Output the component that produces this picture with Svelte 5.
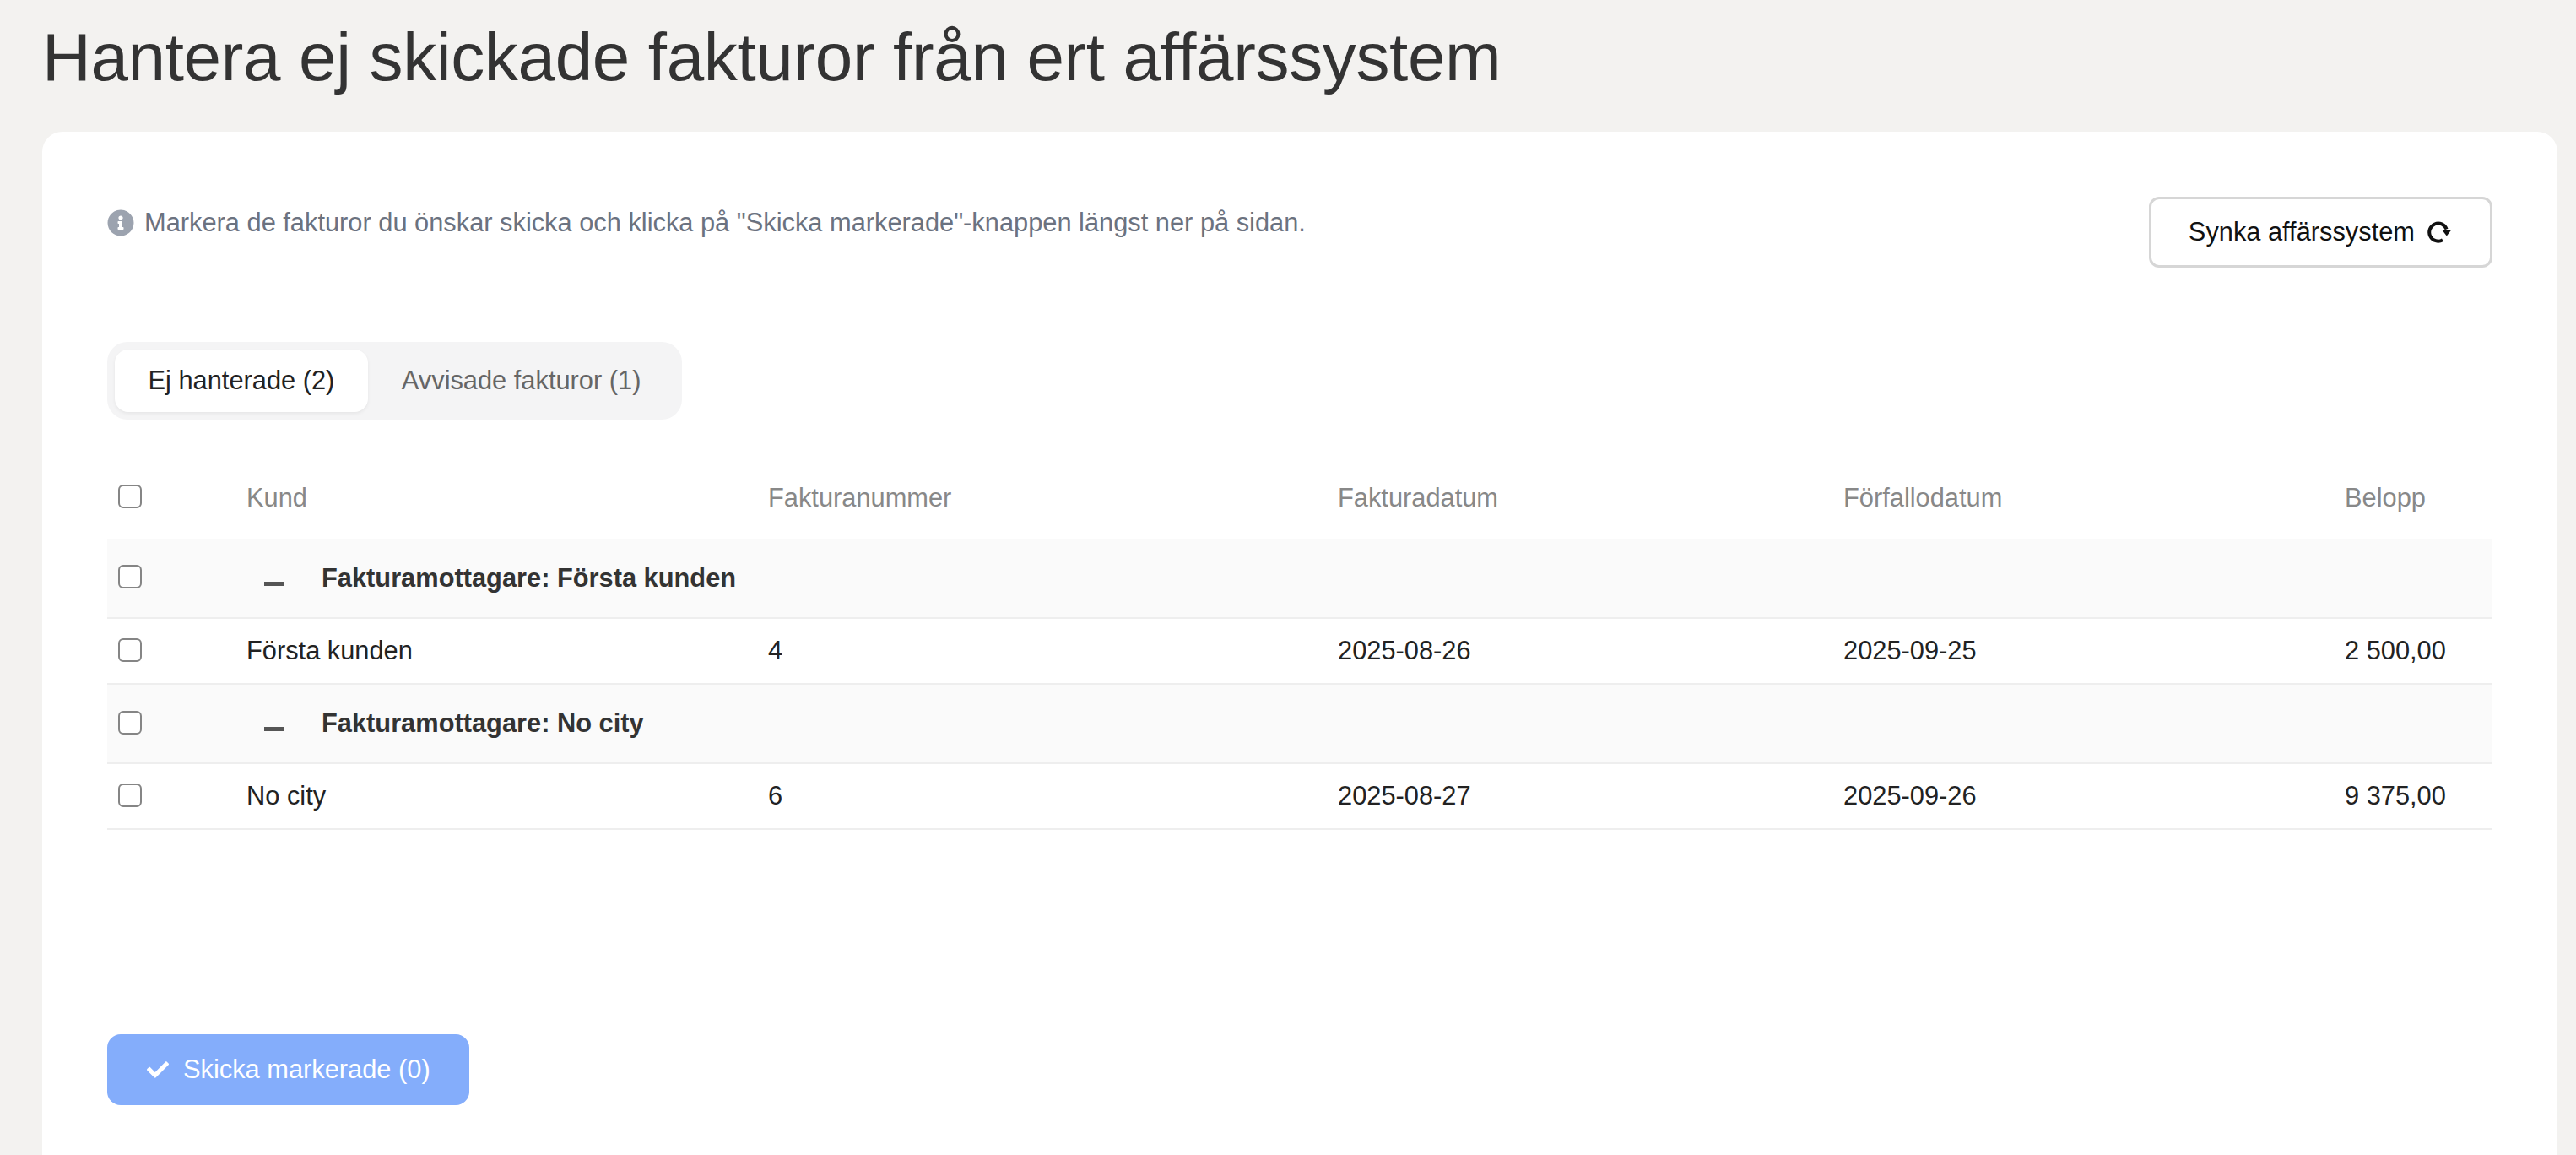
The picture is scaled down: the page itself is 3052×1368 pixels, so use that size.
<script>
  const columns = ["Kund", "Fakturanummer", "Fakturadatum", "Förfallodatum", "Belopp"];

  const groups = [
    {
      recipient: "Första kunden",
      invoices: [{ customer: "Första kunden", number: "4", date: "2025-08-26", due: "2025-09-25", amount: "2 500,00" }]
    },
    {
      recipient: "No city",
      invoices: [{ customer: "No city", number: "6", date: "2025-08-27", due: "2025-09-26", amount: "9 375,00" }]
    }
  ];
</script>

<div class="page">
  <h1>Hantera ej skickade fakturor från ert affärssystem</h1>

  <main class="card">
    <div class="top">
      <p class="info">
        <svg class="info-icon" viewBox="0 0 512 512" aria-hidden="true">
          <path d="M256 8C119.043 8 8 119.083 8 256c0 136.997 111.043 248 248 248s248-111.003 248-248C504 119.083 392.957 8 256 8zm0 110c23.196 0 42 18.804 42 42s-18.804 42-42 42-42-18.804-42-42 18.804-42 42-42zm56 254c0 6.627-5.373 12-12 12h-88c-6.627 0-12-5.373-12-12v-24c0-6.627 5.373-12 12-12h12v-64h-12c-6.627 0-12-5.373-12-12v-24c0-6.627 5.373-12 12-12h64c6.627 0 12 5.373 12 12v100h12c6.627 0 12 5.373 12 12v24z"/>
        </svg>
        Markera de fakturor du önskar skicka och klicka på "Skicka markerade"-knappen längst ner på sidan.
      </p>
      <button class="sync">
        Synka affärssystem
        <svg class="sync-icon" viewBox="0 0 30 28" aria-hidden="true">
          <path class="sync-arc" d="M18 23.2A10.5 10.5 0 1 1 22.6 10.5"/>
          <path class="sync-head" d="M17 11h11.5l-5.7 7.4z"/>
        </svg>
      </button>
    </div>

    <div class="tabs">
      <button class="tab active">Ej hanterade (2)</button>
      <button class="tab">Avvisade fakturor (1)</button>
    </div>

    <table>
      <colgroup>
        <col class="c-check" />
        <col class="c-customer" />
        <col class="c-number" />
        <col class="c-date" />
        <col class="c-due" />
        <col class="c-amount" />
      </colgroup>
      <thead>
        <tr>
          <th class="check"><input type="checkbox" aria-label="Markera alla" /></th>
          {#each columns as column}
            <th>{column}</th>
          {/each}
        </tr>
      </thead>
      <tbody>
        {#each groups as group}
          <tr class="group">
            <td class="check"><input type="checkbox" aria-label="Markera grupp" /></td>
            <td colspan="5">
              <div class="group-label">
                <span class="minus"></span>
                <strong>Fakturamottagare: {group.recipient}</strong>
              </div>
            </td>
          </tr>
          {#each group.invoices as invoice}
            <tr class="invoice">
              <td class="check"><input type="checkbox" aria-label="Markera faktura" /></td>
              <td>{invoice.customer}</td>
              <td>{invoice.number}</td>
              <td>{invoice.date}</td>
              <td>{invoice.due}</td>
              <td>{invoice.amount}</td>
            </tr>
          {/each}
        {/each}
      </tbody>
    </table>

    <button class="send">
      <svg class="send-icon" viewBox="0 0 512 512" aria-hidden="true">
        <path d="M173.898 439.404l-166.4-166.4c-9.997-9.997-9.997-26.206 0-36.204l36.203-36.204c9.997-9.998 26.206-9.998 36.204 0L192 312.69 432.095 72.596c9.997-9.997 26.206-9.997 36.204 0l36.203 36.204c9.997 9.997 9.997 26.206 0 36.204l-294.4 294.401c-9.998 9.997-26.207 9.997-36.204-.001z"/>
      </svg>
      Skicka markerade (0)
    </button>
  </main>
</div>

<style>
  :global(body) {
    margin: 0;
    background: #f3f2f0;
  }

  .page {
    height: 1368px;
    overflow: hidden;
    padding: 20px 22px 0 50px;
    box-sizing: border-box;
    font-family: "Liberation Sans", Arial, sans-serif;
    font-size: 30.8px;
    color: #222;
  }

  h1 {
    margin: 0 0 40px;
    font-size: 80px;
    line-height: 96px;
    font-weight: 400;
    letter-spacing: -0.35px;
    color: #333;
  }

  .card {
    background: #fff;
    border-radius: 24px;
    padding: 77px 77px 120px;
  }

  .top {
    display: flex;
    justify-content: space-between;
    align-items: flex-start;
  }

  .info {
    display: flex;
    align-items: center;
    gap: 12px;
    margin: 8px 0 0;
    line-height: 45px;
    color: #6b7280;
  }

  .info-icon {
    width: 32px;
    height: 32px;
    fill: #9ca3af;
  }

  button {
    font: inherit;
    cursor: pointer;
  }

  .sync {
    display: flex;
    align-items: center;
    gap: 15px;
    height: 84px;
    padding: 0 44px;
    background: #fff;
    border: 3px solid #d6d6d6;
    border-radius: 12px;
    color: #111;
  }

  .sync-icon {
    width: 30px;
    height: 28px;
  }

  .sync-arc {
    fill: none;
    stroke: #111;
    stroke-width: 4;
  }

  .sync-head {
    fill: #111;
  }

  .tabs {
    display: flex;
    width: fit-content;
    margin: 88px 0 43px;
    padding: 9px;
    background: #f4f4f5;
    border-radius: 24px;
  }

  .tab {
    height: 74px;
    padding: 0 40px 0 39.5px;
    background: none;
    border: 0;
    border-radius: 16px;
    color: #666;
  }

  .tab.active {
    background: #fff;
    color: #222;
    box-shadow: 0 2px 4px rgba(0, 0, 0, 0.06);
  }

  table {
    width: 100%;
    table-layout: fixed;
    border-collapse: collapse;
  }

  .c-check { width: 165px; }
  .c-customer { width: 618px; }
  .c-number { width: 675px; }
  .c-date { width: 599px; }
  .c-due { width: 594px; }
  .c-amount { width: 175px; }

  th,
  td {
    padding: 0;
    text-align: left;
    font-weight: 400;
  }

  thead tr {
    height: 98px;
  }

  th {
    padding-top: 1px;
    color: #888;
  }

  .check {
    padding-left: 13px;
  }

  input {
    display: block;
    appearance: none;
    box-sizing: border-box;
    width: 28px;
    height: 28px;
    margin: 0 0 3px;
    background: #fff;
    border: 2px solid #858585;
    border-radius: 6px;
  }

  .group {
    height: 94px;
    background: #fafafa;
    border-bottom: 2px solid #eee;
  }

  .invoice {
    height: 78px;
    border-bottom: 2px solid #eee;
  }

  .group-label {
    display: flex;
    align-items: center;
    gap: 44px;
    padding-left: 21px;
  }

  .minus {
    width: 24px;
    height: 5px;
    margin-top: 13px;
    background: #555;
  }

  strong {
    font-weight: 700;
    color: #333;
  }

  .send {
    display: flex;
    align-items: center;
    gap: 17px;
    height: 84px;
    margin-top: 242px;
    padding: 0 46px 0 47px;
    background: #84adfb;
    border: 0;
    border-radius: 16px;
    color: #fff;
  }

  .send-icon {
    width: 26px;
    height: 26px;
    fill: #fff;
  }
</style>
